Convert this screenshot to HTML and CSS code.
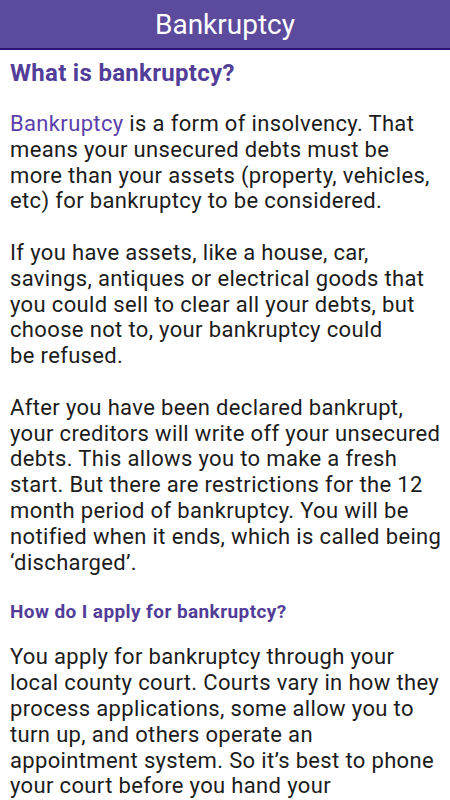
FILE: index.html
```html
<!DOCTYPE html>
<html lang="en">
<head>
    <meta charset="UTF-8">
    <meta name="viewport" content="width=device-width, initial-scale=1.0">
    <title>Bankruptcy</title>
    <link rel="stylesheet" href="styles.css">
</head>
<body>
    <div class="toolbar">
        <h1>Bankruptcy</h1>
    </div>
    <div class="content">
        <h2>What is bankruptcy?</h2>
        <p><a href="#">Bankruptcy</a> is a form of insolvency. That means your unsecured debts must be more than your assets (property, vehicles, etc) for bankruptcy to be considered.</p>
        <p>If you have assets, like a house, car, savings, antiques or electrical goods that you could sell to clear all your debts, but choose not to, your bankruptcy could be&nbsp;refused.</p>
        <p>After you have been declared bankrupt, your creditors will write off your unsecured debts. This allows you to make a fresh start. But there are restrictions for the 12 month period of bankruptcy. You will be notified when it ends, which is called being &lsquo;discharged&rsquo;.</p>
        <h3>How do I apply for bankruptcy?</h3>
        <p>You apply for bankruptcy through your local county court. Courts vary in how they process applications, some allow you to turn up, and others operate an appointment system. So it&rsquo;s best to phone your court before you hand your application in.</p>
    </div>
</body>
</html>
```

FILE: styles.css
```css
body {
    margin: 0;
    padding: 0;
    font-family: Roboto, "Noto Sans", sans-serif;
    background-color: #fff;
    color: #1c1c1c;
    overflow: hidden;
}
.toolbar {
    background-color: #5c4a9c;
    border-bottom: 2px solid #2d1575;
    height: 48px;
    display: flex;
    align-items: center;
    justify-content: center;
}
.toolbar h1 {
    margin: 0;
    color: #fff;
    font-size: 28px;
    font-weight: normal;
}
.content {
    padding: 0 6px 0 10px;
}
h2 {
    margin: 9px 0 24px;
    font-size: 24px;
    line-height: 28px;
    letter-spacing: 0.3px;
    color: #523d99;
}
h3 {
    margin: 25px 0 20px;
    font-size: 19px;
    line-height: 24px;
    letter-spacing: 0.4px;
    color: #523d99;
}
p {
    margin: 0;
    font-size: 22px;
    line-height: 25.8px;
    letter-spacing: 0.35px;
}
p + p {
    margin-top: 25.8px;
}
a {
    color: #5b3fab;
    text-decoration: none;
}
```
